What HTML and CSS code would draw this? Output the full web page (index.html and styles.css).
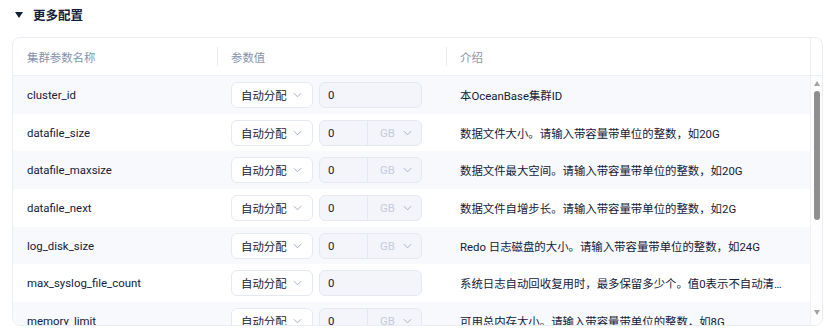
FILE: index.html
```html
<!DOCTYPE html>
<html lang="zh">
<head>
<meta charset="utf-8">
<link rel="stylesheet" href="styles.css">
</head>
<body>
<div class="page">
  <div class="section-title"><span class="caret"></span><span class="title-text">更多配置</span></div>
  <div class="table">
    <div class="thead">
      <div class="th">集群参数名称</div>
      <div class="th sep">参数值</div>
      <div class="th sep">介绍</div>
      <div class="th gutter"></div>
    </div>
    <div class="tbody">
      <div class="rows">
        <div class="row odd">
          <div class="td name">cluster_id</div>
          <div class="td value">
            <div class="select"><span>自动分配</span><svg class="chev" viewBox="0 0 10 6"><path d="M1 1l4 4 4-4"/></svg></div>
            <div class="input"><span class="num">0</span></div>
          </div>
          <div class="td desc">本OceanBase集群ID</div>
        </div>
        <div class="row">
          <div class="td name">datafile_size</div>
          <div class="td value">
            <div class="select"><span>自动分配</span><svg class="chev" viewBox="0 0 10 6"><path d="M1 1l4 4 4-4"/></svg></div>
            <div class="input unit"><span class="num">0</span><span class="addon">GB<svg class="chev" viewBox="0 0 10 6"><path d="M1 1l4 4 4-4"/></svg></span></div>
          </div>
          <div class="td desc">数据文件大小。请输入带容量带单位的整数，如20G</div>
        </div>
        <div class="row odd">
          <div class="td name">datafile_maxsize</div>
          <div class="td value">
            <div class="select"><span>自动分配</span><svg class="chev" viewBox="0 0 10 6"><path d="M1 1l4 4 4-4"/></svg></div>
            <div class="input unit"><span class="num">0</span><span class="addon">GB<svg class="chev" viewBox="0 0 10 6"><path d="M1 1l4 4 4-4"/></svg></span></div>
          </div>
          <div class="td desc">数据文件最大空间。请输入带容量带单位的整数，如20G</div>
        </div>
        <div class="row">
          <div class="td name">datafile_next</div>
          <div class="td value">
            <div class="select"><span>自动分配</span><svg class="chev" viewBox="0 0 10 6"><path d="M1 1l4 4 4-4"/></svg></div>
            <div class="input unit"><span class="num">0</span><span class="addon">GB<svg class="chev" viewBox="0 0 10 6"><path d="M1 1l4 4 4-4"/></svg></span></div>
          </div>
          <div class="td desc">数据文件自增步长。请输入带容量带单位的整数，如2G</div>
        </div>
        <div class="row odd">
          <div class="td name">log_disk_size</div>
          <div class="td value">
            <div class="select"><span>自动分配</span><svg class="chev" viewBox="0 0 10 6"><path d="M1 1l4 4 4-4"/></svg></div>
            <div class="input unit"><span class="num">0</span><span class="addon">GB<svg class="chev" viewBox="0 0 10 6"><path d="M1 1l4 4 4-4"/></svg></span></div>
          </div>
          <div class="td desc">Redo 日志磁盘的大小。请输入带容量带单位的整数，如24G</div>
        </div>
        <div class="row">
          <div class="td name">max_syslog_file_count</div>
          <div class="td value">
            <div class="select"><span>自动分配</span><svg class="chev" viewBox="0 0 10 6"><path d="M1 1l4 4 4-4"/></svg></div>
            <div class="input"><span class="num">0</span></div>
          </div>
          <div class="td desc">系统日志自动回收复用时，最多保留多少个。值0表示不自动清理</div>
        </div>
        <div class="row odd">
          <div class="td name">memory_limit</div>
          <div class="td value">
            <div class="select"><span>自动分配</span><svg class="chev" viewBox="0 0 10 6"><path d="M1 1l4 4 4-4"/></svg></div>
            <div class="input unit"><span class="num">0</span><span class="addon">GB<svg class="chev" viewBox="0 0 10 6"><path d="M1 1l4 4 4-4"/></svg></span></div>
          </div>
          <div class="td desc">可用总内存大小。请输入带容量带单位的整数，如8G</div>
        </div>
      </div>
      <div class="scrollbar">
        <span class="arrow up"></span>
        <div class="track"><div class="thumb"></div></div>
        <span class="arrow down"></span>
      </div>
    </div>
  </div>
</div>
</body>
</html>
```
FILE: styles.css
```css
* { box-sizing: border-box; }
html, body { margin: 0; padding: 0; background: #ffffff; }
body {
  font-family: Roboto, "Noto Sans CJK SC", sans-serif;
  font-size: 11.4px;
  color: #132039;
  width: 831px;
  height: 332px;
  overflow: hidden;
}
.page { padding: 0 0 0 12px; }
.section-title {
  height: 29px;
  display: flex;
  align-items: center;
  padding-left: 3px;
  gap: 10px;
}
.caret {
  width: 0; height: 0;
  border-left: 4px solid transparent;
  border-right: 4px solid transparent;
  border-top: 6px solid #132039;
}
.title-text { font-size: 12.5px; font-weight: 700; color: #132039; }
.table {
  margin-top: 8px;
  width: 811px;
  border: 1px solid #e9edf4;
  border-radius: 8px;
  overflow: hidden;
}
.thead {
  display: grid;
  grid-template-columns: 204px 229px 364px 12px;
  height: 38px;
  border-bottom: 1px solid #eaeef5;
}
.th {
  display: flex;
  align-items: center;
  padding: 0 14px;
  color: #8592ad;
  position: relative;
}
.th.sep::before {
  content: "";
  position: absolute;
  left: 0; top: 9px;
  width: 1px; height: 19px;
  background: #e6eaf1;
}
.th.gutter { padding: 0; border-left: 1px solid #eef0f5; }
.tbody { display: flex; height: 249px; }
.rows { width: 797px; overflow: hidden; }
.row {
  display: grid;
  grid-template-columns: 204px 229px 364px;
  height: 37.7px;
  align-items: center;
}
.row.odd { background: #f8f9fc; }
.td { padding: 0 14px; white-space: nowrap; }
.desc { overflow: hidden; text-overflow: ellipsis; padding-right: 28px; }
.value { display: flex; gap: 6px; align-items: center; }
.select {
  width: 82px; height: 26px;
  border: 1px solid #e3e8f1;
  background: #ffffff;
  border-radius: 6px;
  display: flex; align-items: center; justify-content: space-between;
  padding: 0 10px 0 9px;
}
.chev { width: 9px; height: 6px; fill: none; stroke: #a5afc2; stroke-width: 1.1; }
.input {
  width: 103px; height: 26px;
  border: 1px solid #e3e8f1;
  background: #f3f5fa;
  border-radius: 6px;
  display: flex; align-items: center;
}
.num { padding-left: 8px; flex: 1; }
.input.unit .num { flex: 0 0 47px; }
.addon {
  flex: 1;
  height: 100%;
  border-left: 1px solid #e3e8f1;
  display: flex; align-items: center; justify-content: space-between;
  padding: 0 9px 0 12px;
  color: #c3cbdc;
}
.scrollbar {
  width: 12px;
  border-left: 1px solid #eef0f5;
  display: flex; flex-direction: column; align-items: center;
  padding: 5px 0 10px;
  background: #fdfdfd;
}
.arrow { width: 0; height: 0; border-left: 3.5px solid transparent; border-right: 3.5px solid transparent; }
.arrow.up { border-bottom: 5px solid #a3a3a3; }
.arrow.down { border-top: 5px solid #a3a3a3; }
.track { flex: 1; width: 100%; display: flex; justify-content: center; padding-top: 5px; }
.thumb { width: 6px; height: 129px; border-radius: 3px; background: #8f8f8f; }
```
